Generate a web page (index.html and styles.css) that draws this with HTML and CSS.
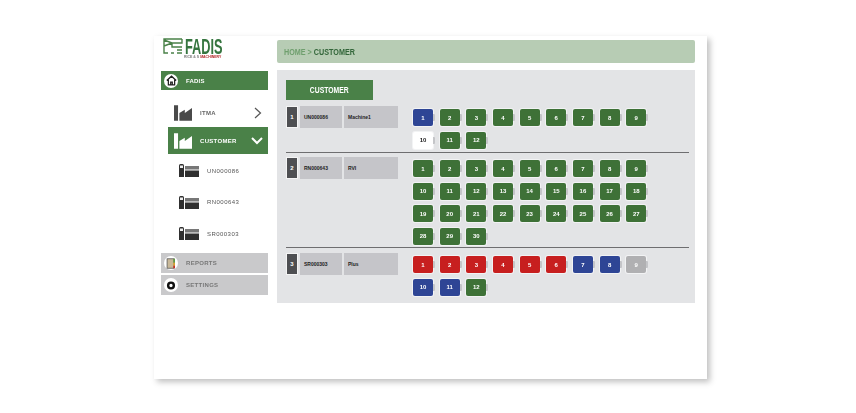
FILE: index.html
```html
<!DOCTYPE html>
<html lang="en">
<head>
<meta charset="utf-8">
<title>FADIS - Customer</title>
<link rel="stylesheet" href="styles.css">
</head>
<body>
<svg class="defs" width="0" height="0" aria-hidden="true">
  <defs>
    <symbol id="factory" viewBox="0 0 20 17"><path d="M0 0h4.500v17H0zM6 17V8.500l6-3.500v3.500L20 3v14z"/></symbol>
    <symbol id="machine" viewBox="0 0 20 13"><path d="M0 1.500Q0 0 1.500 0h2Q5 0 5 1.500V13H0z"/><path class="m-hole" d="M1 1.500h3v2.500H1z"/><path class="m-mid" d="M6 2h14v3.500H6z"/><path d="M6 6.500h14V13H6z"/></symbol>
  </defs>
</svg>
<main class="sheet">
  <aside class="sidebar">
    <div class="logo">
      <svg class="logo-mark" viewBox="0 0 20 16" aria-hidden="true">
        <path class="logo-line" d="M19 1H1v14h4M19 1v4H9L1 2M1 8l8-3M9 5v4h10M8 15h3M14 12h5M14 15h5"/>
      </svg>
      <div class="logo-text">
        <span class="logo-name">FADIS</span>
        <span class="logo-sub">RICE &amp; S <b>MACHINERY</b></span>
      </div>
    </div>
    <div class="nav-top">
      <span class="home-disc"><svg viewBox="0 0 14 14" aria-hidden="true"><path class="home-ico" d="M1 7l6-5.500L13 7M3 6v6.500h8V6M6 12.500V9h2v3.500"/></svg></span>
      <span>FADIS</span>
    </div>
    <div class="nav-item">
      <svg class="factory-ico"><use href="#factory"/></svg>
      <span class="nav-label">ITMA</span>
      <svg class="chev" viewBox="0 0 8 12" aria-hidden="true"><path d="M1 1l5.500 5L1 11"/></svg>
    </div>
    <div class="nav-item active">
      <svg class="factory-ico"><use href="#factory"/></svg>
      <span class="nav-label">CUSTOMER</span>
      <svg class="chev-down" viewBox="0 0 12 8" aria-hidden="true"><path d="M1 1l5 5 5-5"/></svg>
    </div>
    <ul class="machines">
      <li><svg class="machine-ico"><use href="#machine"/></svg>UN000086</li>
      <li><svg class="machine-ico"><use href="#machine"/></svg>RN000643</li>
      <li><svg class="machine-ico"><use href="#machine"/></svg>SR000303</li>
    </ul>
    <div class="nav-grey">
      <span class="grey-disc"><svg viewBox="0 0 12 14" aria-hidden="true"><rect x="1" y="1" width="9" height="12" fill="#c9b99a" stroke="#555"/><path d="M10 1v5" stroke="#5a9a3c" stroke-width="2"/><path d="M10 6v4" stroke="#e0a020" stroke-width="2"/><path d="M10 10v3" stroke="#c8281f" stroke-width="2"/></svg></span>
      <span>REPORTS</span>
    </div>
    <div class="nav-grey">
      <span class="grey-disc"><svg viewBox="0 0 14 14" aria-hidden="true"><circle cx="7" cy="7" r="4" fill="none" stroke="#111" stroke-width="3.400"/></svg></span>
      <span>SETTINGS</span>
    </div>
  </aside>
  <section class="content">
    <div class="crumbs"><span class="narrow"><span class="crumb-home">HOME</span> &gt; <b>CUSTOMER</b></span></div>
    <div class="panel">
      <div class="panel-btn"><span class="narrow center">CUSTOMER</span></div>
      <div class="row">
        <div class="row-info"><span class="num">1</span><span class="code">UN000086</span><span class="name">Machine1</span></div>
        <div class="chips">
          <span class="chip blue">1</span><span class="chip">2</span><span class="chip">3</span><span class="chip">4</span><span class="chip">5</span><span class="chip">6</span><span class="chip">7</span><span class="chip">8</span><span class="chip">9</span>
          <span class="chip white">10</span><span class="chip">11</span><span class="chip">12</span>
        </div>
      </div>
      <div class="row">
        <div class="row-info"><span class="num">2</span><span class="code">RN000643</span><span class="name">RVI</span></div>
        <div class="chips">
          <span class="chip">1</span><span class="chip">2</span><span class="chip">3</span><span class="chip">4</span><span class="chip">5</span><span class="chip">6</span><span class="chip">7</span><span class="chip">8</span><span class="chip">9</span>
          <span class="chip">10</span><span class="chip">11</span><span class="chip">12</span><span class="chip">13</span><span class="chip">14</span><span class="chip">15</span><span class="chip">16</span><span class="chip">17</span><span class="chip">18</span>
          <span class="chip">19</span><span class="chip">20</span><span class="chip">21</span><span class="chip">22</span><span class="chip">23</span><span class="chip">24</span><span class="chip">25</span><span class="chip">26</span><span class="chip">27</span>
          <span class="chip">28</span><span class="chip">29</span><span class="chip">30</span>
        </div>
      </div>
      <div class="row">
        <div class="row-info"><span class="num">3</span><span class="code">SR000303</span><span class="name">Plus</span></div>
        <div class="chips">
          <span class="chip red">1</span><span class="chip red">2</span><span class="chip red">3</span><span class="chip red">4</span><span class="chip red">5</span><span class="chip red">6</span><span class="chip blue">7</span><span class="chip blue">8</span><span class="chip grey">9</span>
          <span class="chip blue">10</span><span class="chip blue">11</span><span class="chip">12</span>
        </div>
      </div>
    </div>
  </section>
</main>
</body>
</html>
```
FILE: styles.css
```css
* { box-sizing: border-box; }
html, body { margin: 0; height: 100%; }
body {
  background: #fff;
  font-family: "Liberation Sans", Arial, sans-serif;
  padding: 36px 0 0 154px;
  overflow: hidden;
}
.defs { position: absolute; }
.sheet {
  width: 553px;
  height: 343px;
  display: flex;
  background: #fff;
  box-shadow: 3px 3px 6px rgba(0, 0, 0, .25);
  padding: 2px 12px 0 7px;
  gap: 9px;
}
.sidebar, .content { filter: blur(.35px); }
.sidebar { width: 107px; display: flex; flex-direction: column; flex: none; }
.logo { height: 33px; display: flex; align-items: flex-start; padding-left: 2px; gap: 1px; }
.logo-mark { width: 20px; height: 16px; flex: none; }
.logo-line { fill: none; stroke: #4a8148; stroke-width: 1.400; }
.logo-text { display: flex; flex-direction: column; width: 38px; }
.logo-name {
  font-weight: 700; font-size: 22px; line-height: 17px; color: #35753f;
  display: inline-block; width: 62px; margin-left: 1px;
  transform: scaleX(.58); transform-origin: left center;
}
.logo-sub { font-size: 3.500px; line-height: 5px; color: #777; font-weight: 700; white-space: nowrap; }
.logo-sub b { color: #b3262a; }
.nav-top {
  height: 19px; background: #4a8148; color: #fff;
  font-size: 6px; font-weight: 700; letter-spacing: .2px;
  display: flex; align-items: center; gap: 8px; padding-left: 3px;
}
.home-disc {
  width: 14px; height: 14px; border-radius: 50%; background: #fff;
  display: flex; align-items: center; justify-content: center;
}
.home-disc svg { width: 11px; height: 11px; }
.home-ico { fill: none; stroke: #222; stroke-width: 1.600; }
.nav-item {
  height: 27px; margin: 9px 0 0 7px; display: flex; align-items: center;
  padding: 0 5px 0 6px; font-size: 6px; font-weight: 700; color: #666; letter-spacing: .3px;
}
.nav-item.active { margin-top: 1px; background: #4a8148; color: #fff; }
.factory-ico { width: 18px; height: 16px; fill: #4a4a4a; flex: none; }
.active .factory-ico { fill: #fff; }
.nav-label { margin-left: 8px; flex: 1; }
.chev { width: 8px; height: 12px; fill: none; stroke: #555; stroke-width: 1.200; flex: none; margin-right: 1px; }
.chev-down { width: 12px; height: 8px; fill: none; stroke: #fff; stroke-width: 2; flex: none; }
.machines {
  list-style: none; margin: 0; padding: 1px 0 0 18px;
  font-size: 6px; color: #555; letter-spacing: .45px;
}
.machines li { height: 31.500px; display: flex; align-items: center; gap: 8px; }
.machine-ico { width: 20px; height: 13px; fill: #2f2f2f; flex: none; }
.m-hole { fill: #eee; }
.m-mid { fill: #777; }
.nav-grey {
  height: 20px; background: #c9c9cb; color: #777;
  font-size: 6px; font-weight: 700; letter-spacing: .3px;
  display: flex; align-items: center; gap: 8px; padding-left: 3px;
  margin-top: 2px;
}
.machines + .nav-grey { margin-top: 3.500px; }
.grey-disc {
  width: 14px; height: 14px; border-radius: 50%; background: #fff;
  display: flex; align-items: center; justify-content: center; flex: none;
}
.grey-disc svg { width: 10px; height: 11px; }
.content { flex: 1; min-width: 0; padding-top: 2px; }
.crumbs {
  height: 23px; background: #b7ccb4; border-radius: 2px;
  display: flex; align-items: center; padding-left: 7px;
  font-size: 9px; color: #6f9f6e; font-weight: 700;
  white-space: pre;
}
.narrow { display: inline-block; transform: scaleX(.8); transform-origin: left center; white-space: nowrap; }
.narrow.center { transform-origin: center; }
.crumbs b { color: #33663a; }
.crumb-home { color: #6f9f6e; }
.panel {
  margin-top: 7px; height: 233px; background: #e3e4e6;
  padding: 10px 6px 0 9px;
}
.panel-btn {
  width: 87px; height: 20px; background: #4a8148; color: #fff;
  font-size: 8.500px; font-weight: 700; display: flex; align-items: center; justify-content: center;
  margin-bottom: 6px;
}
.row { display: flex; align-items: flex-start; border-bottom: 1.500px solid #6e6e70; padding-bottom: 2.800px; margin-bottom: 4.500px; }
.row:last-child { border-bottom: 0; }
.row-info { display: flex; gap: 2px; width: 127px; flex: none; height: 22px; }
.num {
  width: 12px; background: #4e4f52; color: #fff; font-size: 6px; font-weight: 700;
  display: flex; align-items: center; justify-content: center;
  outline: 1px solid #f4f4f4; outline-offset: -1px;
}
.code, .name {
  background: #c5c5c9; color: #222; font-size: 5px; font-weight: 700;
  display: flex; align-items: center; padding-left: 4px;
}
.code { width: 42px; }
.name { width: 54px; }
.chips {
  display: grid; grid-template-columns: repeat(9, 26.670px); grid-auto-rows: 17px; row-gap: 5.400px;
  padding-top: 3.400px; flex: 1;
}
.chip {
  position: relative; width: 20px; height: 17px; border-radius: 2px;
  background: #3e7137; color: #fff; font-size: 6px; font-weight: 700;
  display: flex; align-items: center; justify-content: center;
  box-shadow: 0 0 0 1px rgba(255, 255, 255, .55);
}
.chip::after {
  content: ""; position: absolute; left: 20px; top: 5px; width: 2px; height: 7px;
  background: #c4c5c8; border-radius: 0 1px 1px 0;
}
.chip.blue { background: #2e4595; }
.chip.red { background: #c71f1f; }
.chip.grey { background: #b0b0b2; }
.chip.white { background: #fff; color: #222; }
```
